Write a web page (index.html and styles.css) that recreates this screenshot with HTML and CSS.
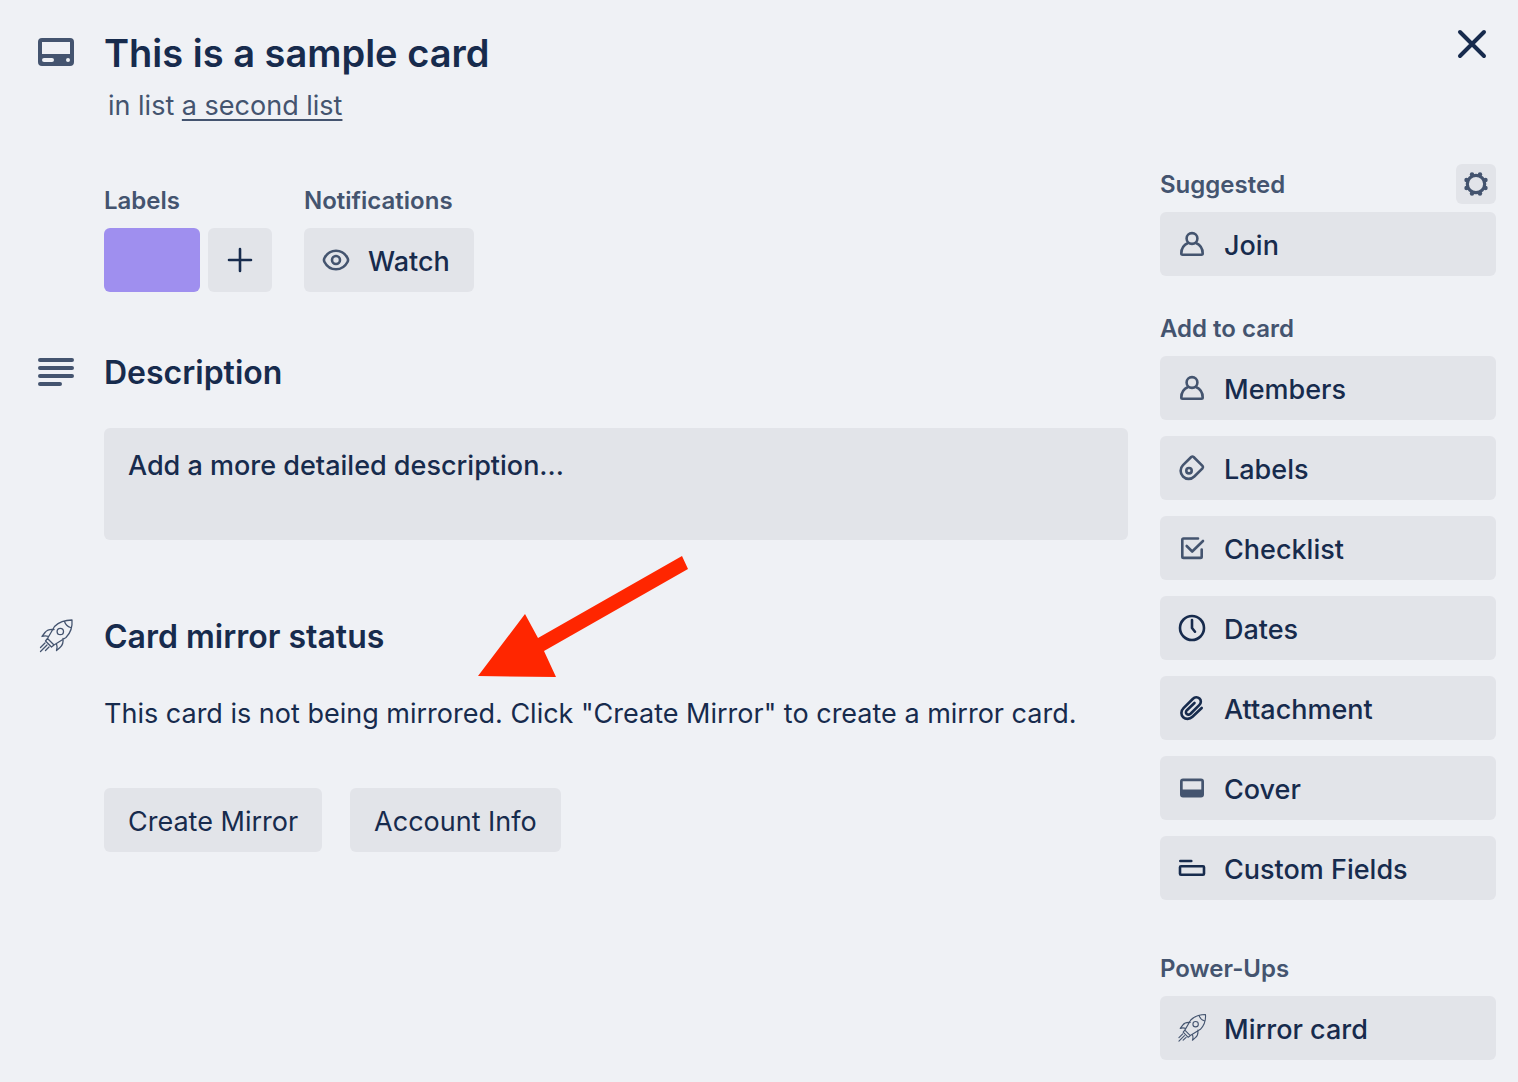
FILE: index.html
```html
<!DOCTYPE html>
<html lang="en">
<head>
    <meta charset="UTF-8">
    <meta name="viewport" content="width=device-width, initial-scale=1.0">
    <title>This is a sample card</title>
    <link rel="stylesheet" href="styles.css">
</head>
<body>
    <!-- Shared icons -->
    <svg class="defs" width="0" height="0" aria-hidden="true">
        <symbol id="rocket" viewBox="0 0 48 48">
            <path d="M40 8c-6 0-13 2-17.500 6.500L15.500 26.500l6.500 6.500 12-7.500C38.500 21 40.500 14 40 8zM32.500 9.500c1 3 3 5 6 6M22 17.500c-4-.5-7 .5-9 3L10 24.500c2-.8 4.500-.8 6.500 0M31 26.500c.5 4-.5 7-3 9L24.500 38.500c.8-2 .8-4.500 0-6.500M15.500 26.500l-2 2.500 6 6 2.500-2M13 31l-4.500 4.500M15 33l-6.500 6.500M17 35l-3.500 3.500"/>
            <circle cx="28.300" cy="19.500" r="3.200"/>
        </symbol>
        <symbol id="person" viewBox="0 0 32 32">
            <circle cx="16" cy="10.500" r="5.400"/>
            <path d="M12 15C7.500 17 5.300 21.500 5.300 25.500c0 .8.500 1.200 1.200 1.200h19c.7 0 1.200-.4 1.200-1.200 0-4-2.200-8.500-6.700-10.500"/>
        </symbol>
    </svg>

    <main class="card">
        <header class="card-header">
            <svg class="icon-large" viewBox="0 0 24 24">
                <path fill="currentColor" fill-rule="evenodd" d="M5 5h14a2 2 0 0 1 2 2v10a2 2 0 0 1-2 2H5a2 2 0 0 1-2-2V7a2 2 0 0 1 2-2zM5 7v6h14V7zM6 15a1 1 0 0 0 0 2h4a1 1 0 0 0 0-2zM18 15a1 1 0 1 0 0 2a1 1 0 0 0 0-2z"/>
            </svg>
            <div class="card-title">
                <h1>This is a sample card</h1>
                <p>in list <a href="#">a second list</a></p>
            </div>
            <button class="close" aria-label="Close">
                <svg class="icon-large line" viewBox="0 0 48 48"><path stroke-width="4" d="M12 12l24 24M36 12L12 36"/></svg>
            </button>
        </header>

        <div class="columns">
            <div class="main-col">
                <div class="details">
                    <div>
                        <h3>Labels</h3>
                        <div class="label-row">
                            <button class="label-purple" aria-label="Purple label"></button>
                            <button class="btn add" aria-label="Add label">
                                <svg class="icon line dark" viewBox="0 0 32 32"><path d="M16 5v22M5 16h22"/></svg>
                            </button>
                        </div>
                    </div>
                    <div>
                        <h3>Notifications</h3>
                        <button class="btn">
                            <svg class="icon line" viewBox="0 0 32 32"><path d="M16 6.700c5 0 9 2.500 11.500 7.300.7 1.300.7 2.700 0 4-2.500 4.800-6.500 7.300-11.500 7.300S7 22.800 4.500 18c-.7-1.300-.7-2.700 0-4C7 9.200 11 6.700 16 6.700z"/><circle cx="16" cy="16" r="4"/></svg>
                            Watch
                        </button>
                    </div>
                </div>

                <section class="section">
                    <div class="section-head">
                        <svg class="icon-large line" viewBox="0 0 48 48"><path stroke-width="4" d="M8 12h32M8 20h32M8 28h32M8 36h20"/></svg>
                        <h2>Description</h2>
                    </div>
                    <button class="description">Add a more detailed description...</button>
                </section>

                <section class="section mirror">
                    <div class="section-head">
                        <svg class="icon-large rocket"><use href="#rocket"/></svg>
                        <h2>Card mirror status</h2>
                    </div>
                    <p>This card is not being mirrored. Click "Create Mirror" to create a mirror card.</p>
                    <div class="actions">
                        <button class="btn-plain">Create Mirror</button>
                        <button class="btn-plain">Account Info</button>
                    </div>
                    <svg class="arrow" viewBox="0 0 210 121"><path d="M0 120L47 58l13 24L204 0l6 13L66 95l12 26z"/></svg>
                </section>
            </div>

            <aside class="sidebar">
                <div class="group">
                    <div class="group-head">
                        <h3>Suggested</h3>
                        <button class="gear" aria-label="Settings">
                            <svg class="icon" viewBox="0 0 32 32">
                                <circle cx="16" cy="16" r="8.700" fill="none" stroke="currentColor" stroke-width="3.200"/>
                                <g fill="currentColor">
                                    <circle cx="20" cy="6.500" r="2.200"/><circle cx="25.500" cy="12" r="2.200"/>
                                    <circle cx="25.500" cy="20" r="2.200"/><circle cx="20" cy="25.500" r="2.200"/>
                                    <circle cx="12" cy="25.500" r="2.200"/><circle cx="6.500" cy="20" r="2.200"/>
                                    <circle cx="6.500" cy="12" r="2.200"/><circle cx="12" cy="6.500" r="2.200"/>
                                </g>
                            </svg>
                        </button>
                    </div>
                    <button class="btn"><svg class="icon line"><use href="#person"/></svg>Join</button>
                </div>

                <div class="group">
                    <h3>Add to card</h3>
                    <button class="btn"><svg class="icon line"><use href="#person"/></svg>Members</button>
                    <button class="btn">
                        <svg class="icon line" viewBox="0 0 32 32"><path d="M15.200 5L7 13.200a7.900 7.900 0 0 0 0 11.300a7.900 7.900 0 0 0 11.300 0L26.500 16.300q1-1.200 0-2.400L17.600 5q-1.200-1-2.400 0z"/><circle cx="13" cy="18.700" r="2.700"/></svg>
                        Labels
                    </button>
                    <button class="btn">
                        <svg class="icon line" viewBox="0 0 32 32"><path d="M22 6.500H7.500q-1.200 0-1.200 1.200v17q0 1.200 1.200 1.200h17q1.200 0 1.200-1.200V17.500M10.700 14l5.500 5.500L27 9"/></svg>
                        Checklist
                    </button>
                    <button class="btn">
                        <svg class="icon line dark" viewBox="0 0 32 32"><circle cx="16" cy="16" r="12"/><path d="M16 8v8l3 3.700"/></svg>
                        Dates
                    </button>
                    <button class="btn">
                        <svg class="icon line dark" viewBox="0 0 32 32"><path d="M25.700 16L16.500 24.800c-3 2.900-7 2.600-9.300.4s-2.600-6.200.3-9.100L16.700 7c2.200-2.200 5-2.100 6.800-.5s1.900 4.500-.3 6.700L14.500 21.700c-1.300 1.200-2.800 1.200-3.800.3s-1.100-2.500.2-3.800L18.500 11"/></svg>
                        Attachment
                    </button>
                    <button class="btn">
                        <svg class="icon" viewBox="0 0 32 32"><path fill="currentColor" fill-rule="evenodd" d="M7 6.500h18a3 3 0 0 1 3 3v13a3 3 0 0 1-3 3H7a3 3 0 0 1-3-3v-13a3 3 0 0 1 3-3zM6.700 9.200v8.300h18.600V9.200z"/></svg>
                        Cover
                    </button>
                    <button class="btn">
                        <svg class="icon line dark" viewBox="0 0 32 32"><path d="M4.300 9h11"/><rect x="4" y="14.300" width="24" height="8.500" rx="1"/></svg>
                        Custom Fields
                    </button>
                </div>

                <div class="group power-ups">
                    <h3>Power-Ups</h3>
                    <button class="btn"><svg class="icon rocket" viewBox="5 5 38 38"><use href="#rocket" width="48" height="48"/></svg>Mirror card</button>
                </div>
            </aside>
        </div>
    </main>
</body>
</html>
```
FILE: styles.css
```css
* {
    box-sizing: border-box;
}

body {
    margin: 0;
    background-color: #eff1f5;
    color: #172b4d;
    font-family: Inter, 'Liberation Sans', sans-serif;
    font-size: 27px;
    line-height: 40px;
}

h1, h2, h3, p {
    margin: 0;
}

h1 {
    font-size: 38px;
    font-weight: 600;
    line-height: 50px;
}

h2 {
    font-size: 32px;
    font-weight: 600;
    line-height: 50px;
}

h3 {
    color: #44546f;
    font-size: 24px;
    font-weight: 600;
    line-height: 42px;
}

button {
    border: none;
    border-radius: 6px;
    background-color: #e2e4e9;
    color: #172b4d;
    font: inherit;
    cursor: pointer;
}

button:hover {
    background-color: #d5d8df;
}

svg {
    display: block;
    flex: none;
}

.defs {
    position: absolute;
}

.icon {
    width: 32px;
    height: 32px;
    color: #44546f;
}

.icon-large {
    width: 48px;
    height: 48px;
    color: #44546f;
}

.line, .rocket {
    fill: none;
    stroke: currentColor;
    stroke-width: 2.6;
    stroke-linecap: round;
    stroke-linejoin: round;
}

.rocket {
    stroke-width: 1.3;
}

.dark, .close svg {
    color: #172b4d;
}

.card {
    padding: 28px 22px 22px 32px;
}

.card-header {
    display: flex;
    gap: 24px;
}

.card-title {
    flex: 1;
}

.card-title p {
    padding: 12px 4px 0;
    color: #44546f;
    line-height: 32px;
}

.card-title a {
    color: inherit;
    text-decoration: underline 2px;
    text-underline-offset: 4px;
    text-decoration-skip-ink: none;
}

.close {
    align-self: flex-start;
    padding: 0;
    margin-top: -8px;
    background: none;
}

.columns {
    display: flex;
    gap: 32px;
    padding-top: 42px;
}

.main-col {
    flex: 1;
    min-width: 0;
    padding-top: 16px;
}

.details {
    display: flex;
    gap: 32px;
    padding-left: 72px;
}

.details h3 {
    margin-bottom: 6px;
}

.label-row {
    display: flex;
    gap: 8px;
}

.label-purple {
    width: 96px;
    background-color: #9f8fef;
}

.btn {
    display: flex;
    align-items: center;
    gap: 16px;
    height: 64px;
    padding: 4px 24px 0 16px;
    font-weight: 500;
    text-align: left;
}

.btn .icon {
    margin-bottom: 4px;
}

.add {
    padding-right: 16px;
}

.section {
    padding-top: 56px;
}

.section-head {
    display: flex;
    gap: 24px;
}

.description {
    display: flex;
    align-items: flex-start;
    width: calc(100% - 72px);
    height: 112px;
    margin: 30px 0 0 72px;
    padding: 18px 24px;
    font-weight: 500;
}

.mirror {
    position: relative;
    padding-top: 72px;
}

.mirror p {
    padding: 32px 0 0 72px;
}

.actions {
    display: flex;
    gap: 28px;
    padding: 54px 0 0 72px;
}

.btn-plain {
    height: 64px;
    padding: 4px 24px 0;
}

/* Arrow pointing at the mirror section */
.arrow {
    position: absolute;
    top: 16px;
    left: 446px;
    width: 210px;
    height: 121px;
    fill: #ff2600;
}

.sidebar {
    width: 336px;
}

.group {
    display: flex;
    flex-direction: column;
    gap: 16px;
    margin-bottom: 32px;
}

.group h3 {
    margin-bottom: -10px;
}

.group-head {
    display: flex;
    justify-content: space-between;
    height: 40px;
    margin-bottom: -8px;
}

.gear {
    width: 40px;
    height: 40px;
    padding: 4px;
}

.power-ups {
    margin: 48px 0 0;
}
```
